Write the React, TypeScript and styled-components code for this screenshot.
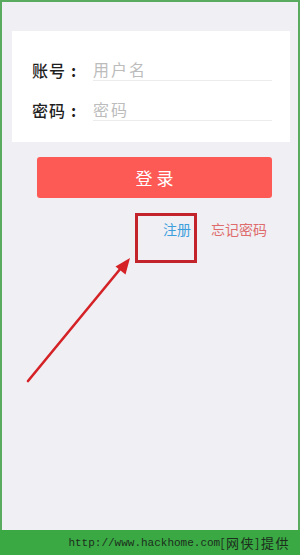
import React from "react";
import styled, { createGlobalStyle } from "styled-components";

const GlobalStyle = createGlobalStyle`
  html, body {
    margin: 0;
    padding: 0;
    background: #f0eff4;
  }
  * {
    box-sizing: border-box;
  }
`;

const cjk = `"Noto Sans CJK SC", "Noto Sans", sans-serif`;

const App = () => {
  return (
    <>
      <GlobalStyle />
      <Frame>
        <Main>
          <Card>
            <Row>
              <Label>
                账号<Colon>:</Colon>
              </Label>
              <Field placeholder="用户名" />
            </Row>
            <Row>
              <Label>
                密码<Colon>:</Colon>
              </Label>
              <Field placeholder="密码" type="text" />
            </Row>
          </Card>

          <LoginButton>登录</LoginButton>

          <Links>
            <LinkText $color="#3d9fdc">注册</LinkText>
            <LinkText $color="#df6c6c">忘记密码</LinkText>
          </Links>

          <Highlight />
          <Arrow viewBox="0 0 300 555">
            <line
              x1="28"
              y1="381"
              x2="121"
              y2="268"
              stroke="#d42226"
              strokeWidth="2.6"
              strokeLinecap="round"
            />
            <polygon points="130,258 115.5,266.5 125.5,274.5" fill="#d42226" />
          </Arrow>
        </Main>

        <Footer>
          http://www.hackhome.com<Cjk>[网侠]提供</Cjk>
        </Footer>
      </Frame>
    </>
  );
};

export default App;

const Frame = styled.div`
  width: 300px;
  height: 555px;
  display: flex;
  flex-direction: column;
  border: 2px solid #5aab60;
  border-bottom: none;
`;

const Main = styled.div`
  flex: 1;
  position: relative;
  display: flex;
  flex-direction: column;
  background: #f0eff4;
`;

const Card = styled.div`
  margin: 29px 0 0 10px;
  width: 278px;
  padding: 10px 18px 21px 20px;
  background: #ffffff;
  display: flex;
  flex-direction: column;
`;

const Row = styled.div`
  height: 40px;
  display: flex;
  align-items: flex-end;
`;

const Label = styled.div`
  width: 61px;
  flex: none;
  font-family: ${cjk};
  font-size: 16px;
  font-weight: 500;
  line-height: 22px;
  letter-spacing: 1px;
  color: #1f1f1f;
  white-space: nowrap;
`;

const Colon = styled.span`
  margin-left: 5px;
  font-weight: 700;
`;

const Field = styled.input`
  flex: 1;
  min-width: 0;
  width: 0;
  height: 22px;
  padding: 0 0 2px 0;
  margin: 0;
  border: none;
  border-bottom: 1px solid #ececec;
  outline: none;
  background: transparent;
  font-family: ${cjk};
  font-size: 16px;
  letter-spacing: 2px;
  color: #333;

  &::placeholder {
    color: #bcbcbc;
  }
`;

const LoginButton = styled.button`
  margin: 15px 0 0 35px;
  width: 235px;
  height: 41px;
  border: none;
  border-radius: 3px;
  background: #fd5a55;
  color: #ffffff;
  font-family: ${cjk};
  font-size: 17px;
  letter-spacing: 4px;
  padding: 0 0 0 4px;
`;

const Links = styled.div`
  margin-top: 21px;
  padding-right: 31px;
  display: flex;
  justify-content: flex-end;
  gap: 20px;
`;

const LinkText = styled.span<{ $color: string }>`
  font-family: ${cjk};
  font-size: 14px;
  line-height: 20px;
  color: ${(p) => p.$color};
`;

const Highlight = styled.div`
  position: absolute;
  left: 133px;
  top: 211px;
  width: 62px;
  height: 50px;
  border: 3px solid #c3232b;
`;

const Arrow = styled.svg`
  position: absolute;
  left: -2px;
  top: -2px;
  width: 300px;
  height: 555px;
  pointer-events: none;
`;

const Footer = styled.div`
  height: 25px;
  margin: 0 -2px;
  background: #3aa944;
  display: flex;
  align-items: center;
  justify-content: flex-end;
  padding-right: 10px;
  font-family: "Liberation Mono", ${cjk};
  font-size: 11px;
  color: #1c2d1c;
  white-space: nowrap;
`;

const Cjk = styled.span`
  font-family: ${cjk};
  font-size: 13px;
  letter-spacing: 1.5px;
`;
